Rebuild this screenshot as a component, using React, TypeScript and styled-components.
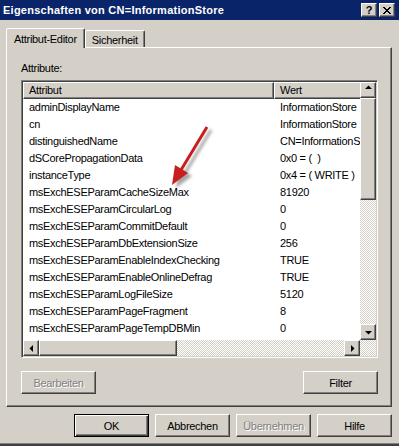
import styled, { createGlobalStyle } from "styled-components";

const GlobalStyle = createGlobalStyle`
    html, body {
        margin: 0;
        padding: 0;
        background: #d4d0c8;
    }
    body {
        font-family: "Liberation Sans", Arial, sans-serif;
        font-size: 11px;
        letter-spacing: -0.3px;
        color: #000;
    }
`

const rows: [string, string][] = [
    ["adminDisplayName", "InformationStore"],
    ["cn", "InformationStore"],
    ["distinguishedName", "CN=InformationStore,CN=EXCHANGE,CN=Servers"],
    ["dSCorePropagationData", "0x0 = (  )"],
    ["instanceType", "0x4 = ( WRITE )"],
    ["msExchESEParamCacheSizeMax", "81920"],
    ["msExchESEParamCircularLog", "0"],
    ["msExchESEParamCommitDefault", "0"],
    ["msExchESEParamDbExtensionSize", "256"],
    ["msExchESEParamEnableIndexChecking", "TRUE"],
    ["msExchESEParamEnableOnlineDefrag", "TRUE"],
    ["msExchESEParamLogFileSize", "5120"],
    ["msExchESEParamPageFragment", "8"],
    ["msExchESEParamPageTempDBMin", "0"],
    ["msExchESEParamTempPath", "C:\\Programme\\Exchsrvr\\mdbdata\\tmp.edb"],
];

const Arrow = ({dir}: {dir: "up" | "down" | "left" | "right"}) => {
    const pts = {
        up: "4,6 11,6 7.5,2.5",
        down: "4,6 11,6 7.5,9.5",
        left: "9,4 9,11 5.5,7.5",
        right: "6,4 6,11 9.5,7.5",
    }[dir];
    return (
        <svg width="14" height="14" viewBox="0 0 14 14">
            <polygon points={pts} fill="#000"/>
        </svg>
    );
};

export default function App() {
    return (
        <>
            <GlobalStyle/>
            <Window>
                <TitleBar>
                    <Title>Eigenschaften von CN=InformationStore</Title>
                    <CaptionButtons>
                        <CaptionButton>?</CaptionButton>
                        <CaptionButton>
                            <svg width="10" height="9" viewBox="0 0 10 9">
                                <path d="M1 1 L8 8 M2 1 L9 8 M8 1 L1 8 M9 1 L2 8" stroke="#000" strokeWidth="1"/>
                            </svg>
                        </CaptionButton>
                    </CaptionButtons>
                </TitleBar>
                <Content>
                    <TabStrip>
                        <Tab $active>Attribut-Editor</Tab>
                        <Tab>Sicherheit</Tab>
                    </TabStrip>
                    <Panel>
                        <Label>Attribute:</Label>
                        <ListBox>
                            <Viewport>
                                <HeaderRow>
                                    <HeaderCell $width={251}>Attribut</HeaderCell>
                                    <HeaderCell $width={100}>Wert</HeaderCell>
                                </HeaderRow>
                                {rows.map(([name, value]) => (
                                    <Row key={name}>
                                        <Cell $width={251}>{name}</Cell>
                                        <Cell $width={86}>{value}</Cell>
                                    </Row>
                                ))}
                            </Viewport>
                            <VScroll>
                                <ScrollButton><Arrow dir="up"/></ScrollButton>
                                <Thumb style={{height: 102}}/>
                                <Track/>
                                <ScrollButton><Arrow dir="down"/></ScrollButton>
                            </VScroll>
                            <HScroll>
                                <ScrollButton><Arrow dir="left"/></ScrollButton>
                                <Thumb style={{width: 138}}/>
                                <Track/>
                                <ScrollButton><Arrow dir="right"/></ScrollButton>
                            </HScroll>
                            <Track/>
                        </ListBox>
                        <PanelButtons>
                            <Button disabled>Bearbeiten</Button>
                            <Button>Filter</Button>
                        </PanelButtons>
                    </Panel>
                    <DialogButtons>
                        <Button $default>OK</Button>
                        <Button>Abbrechen</Button>
                        <Button disabled>Übernehmen</Button>
                        <Button>Hilfe</Button>
                    </DialogButtons>
                </Content>
                <Pointer width="64" height="84" viewBox="0 0 64 84">
                    <defs>
                        <filter id="blur" x="-50%" y="-50%" width="200%" height="200%">
                            <feGaussianBlur stdDeviation="1.6"/>
                        </filter>
                    </defs>
                    <g transform="translate(4 3)" filter="url(#blur)" opacity="0.35">
                        <line x1="47" y1="12" x2="21" y2="55" stroke="#000" strokeWidth="3"/>
                        <polygon points="12,70 15,50 28,58" fill="#000"/>
                    </g>
                    <line x1="47" y1="12" x2="21" y2="55" stroke="#c81e1e" strokeWidth="3"/>
                    <polygon points="12,70 15,50 28,58" fill="#c81e1e"/>
                </Pointer>
            </Window>
        </>
    );
}

const raised = `
    border: 1px solid;
    border-color: #fff #404040 #404040 #fff;
    box-shadow: inset -1px -1px #808080;
`

const Window = styled.div`
    position: relative;
    width: 399px;
    height: 446px;
    box-sizing: border-box;
    background: #d4d0c8;
    border-bottom: 2px solid #404040;
    box-shadow: inset 0 -3px 0 -2px #808080;
`
const TitleBar = styled.div`
    height: 20px;
    background: #0a246a;
    display: flex;
    align-items: center;
    justify-content: space-between;
    padding: 0 4px 0 3px;
`
const Title = styled.span`
    color: #fff;
    font-weight: bold;
    font-size: 11px;
    letter-spacing: 0.25px;
`
const CaptionButtons = styled.div`
    display: flex;
    gap: 2px;
`
const CaptionButton = styled.div`
    ${raised};
    width: 16px;
    height: 14px;
    box-sizing: border-box;
    background: #d4d0c8;
    display: flex;
    align-items: center;
    justify-content: center;
    font-weight: bold;
    font-size: 11px;
    line-height: 1;
`
const Content = styled.div`
    padding: 8px 7px 0 6px;
`
const TabStrip = styled.div`
    display: flex;
    align-items: flex-end;
    height: 19px;
`
const Tab = styled.div<{ $active?: boolean }>`
    position: relative;
    z-index: ${p => p.$active ? 1 : 0};
    box-sizing: border-box;
    height: ${p => p.$active ? "20px" : "17px"};
    margin-bottom: ${p => p.$active ? "-1px" : "0"};
    padding: ${p => p.$active ? "0 7px 0 7px" : "1px 6px 0 6px"};
    background: #d4d0c8;
    border-top: 1px solid #fff;
    border-left: 1px solid #fff;
    border-right: 1px solid #404040;
    border-radius: 2px 2px 0 0;
    box-shadow: inset -1px 0 #808080;
    display: flex;
    align-items: center;
    white-space: nowrap;
`
const Panel = styled.div`
    box-sizing: border-box;
    width: 386px;
    height: 360px;
    padding: 14px 13px 0 14px;
    border: 1px solid;
    border-color: #fff #404040 #404040 #fff;
    box-shadow: inset -1px -1px #808080;
`
const Label = styled.div`
    line-height: 13px;
    margin-bottom: 5px;
`
const ListBox = styled.div`
    box-sizing: border-box;
    width: 357px;
    height: 278px;
    border: 1px solid;
    border-color: #808080 #fff #fff #808080;
    box-shadow: inset 1px 1px #404040, inset -1px -1px #d4d0c8;
    padding: 1px;
    display: grid;
    grid-template-columns: 1fr 16px;
    grid-template-rows: 1fr 16px;
`
const Viewport = styled.div`
    background: #fff;
    overflow: hidden;
    min-width: 0;
    min-height: 0;
`
const HeaderRow = styled.div`
    display: flex;
    height: 17px;
`
const HeaderCell = styled.div<{ $width: number }>`
    ${raised};
    flex: 0 0 ${p => p.$width}px;
    box-sizing: border-box;
    background: #d4d0c8;
    padding-left: 5px;
    line-height: 14px;
    white-space: nowrap;
    overflow: hidden;
`
const Row = styled.div`
    display: flex;
    height: 17px;
    line-height: 17px;
`
const Cell = styled.div<{ $width: number }>`
    flex: 0 0 ${p => p.$width}px;
    box-sizing: border-box;
    padding-left: 6px;
    white-space: pre;
    overflow: hidden;
`
const VScroll = styled.div`
    display: flex;
    flex-direction: column;
`
const HScroll = styled.div`
    display: flex;
`
const ScrollButton = styled.div`
    ${raised};
    flex: 0 0 16px;
    width: 16px;
    height: 16px;
    box-sizing: border-box;
    background: #d4d0c8;
    display: flex;
    align-items: center;
    justify-content: center;
`
const Thumb = styled.div`
    ${raised};
    flex: none;
    box-sizing: border-box;
    background: #d4d0c8;
`
const Track = styled.div`
    flex: 1;
    background: repeating-conic-gradient(#fff 0 25%, #d4d0c8 0 50%) 0 0 / 2px 2px;
`
const PanelButtons = styled.div`
    width: 357px;
    display: flex;
    justify-content: space-between;
    margin-top: 13px;
`
const Button = styled.button<{ $default?: boolean }>`
    width: 75px;
    height: 23px;
    box-sizing: border-box;
    padding: 0;
    font: inherit;
    letter-spacing: inherit;
    background: #d4d0c8;
    border: 1px solid;
    border-color: ${p => p.$default ? "#000" : "#fff #404040 #404040 #fff"};
    box-shadow: ${p => p.$default
        ? "inset 1px 1px #fff, inset -1px -1px #404040, inset -2px -2px #808080"
        : "inset -1px -1px #808080"};
    color: #000;
    &:disabled {
        color: #808080;
        text-shadow: 1px 1px 0 #fff;
    }
`
const DialogButtons = styled.div`
    display: flex;
    justify-content: flex-end;
    gap: 6px;
    margin-top: 7px;
`
const Pointer = styled.svg`
    position: absolute;
    left: 160px;
    top: 115px;
    pointer-events: none;
`
